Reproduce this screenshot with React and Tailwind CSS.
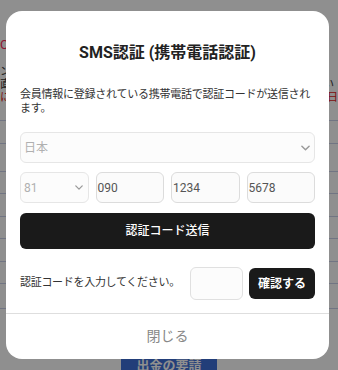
import React from 'react';

const Chevron = ({ className }) => (
  <svg className={className} viewBox="0 0 10 6" fill="none">
    <path d="M1 1l4 4 4-4" stroke="#9a9a9a" strokeWidth="1.6" strokeLinecap="round" strokeLinejoin="round" />
  </svg>
);

const BackgroundPage = () => (
  <div className="w-full h-full bg-white text-[11px] leading-[13px]">
    <div className="h-[38px]" />
    <div className="text-[#ff2a5a] text-[13px]">OF</div>
    <div className="h-[14px]" />
    <div className="flex justify-between text-[#333]">
      <span>ン</span>
      <span />
    </div>
    <div className="flex justify-between text-[#333]">
      <span>直</span>
      <span className="pr-[4px]">しい</span>
    </div>
    <div className="flex justify-between text-[#e02020]">
      <span>に有</span>
      <span>能日</span>
    </div>
    <div className="h-[17px] border-b border-[#c9d0ea]" />
    <div className="h-[23px] border-b border-[#c9d0ea]" />
    <div className="h-[28px] border-b border-[#c9d0ea]" />
    <div className="h-[22px] border-b border-[#c9d0ea]" />
    <div className="h-[23px] border-b border-[#c9d0ea]" />
    <div className="h-[22px] border-b border-[#c9d0ea]" />
    <div className="h-[23px] border-b border-[#c9d0ea]" />
    <div className="h-[22px] border-b border-[#c9d0ea]" />
    <div className="h-[25px] border-b border-[#c9d0ea]" />
    <div className="flex justify-center pt-[46px]">
      <div className="w-[96px] h-[30px] bg-[#3d6fd8] text-white text-[13px] font-bold flex items-start justify-center pt-[4px]">
        出金の要請
      </div>
    </div>
  </div>
);

export default function App() {
  return (
    <div
      className="relative w-[338px] h-[370px] overflow-hidden"
      style={{ fontFamily: 'Roboto, "Noto Sans CJK JP", sans-serif' }}
    >
      <BackgroundPage />
      <div className="absolute inset-0 bg-black/[0.44] pt-[11px] pl-[6px]">
        <div className="w-[323px] bg-white rounded-[16px] flex flex-col">
          <div className="px-[14px]">
            <h2 className="pt-[30px] h-[54px] text-center text-[16px] leading-[24px] font-bold text-[#222]">
              SMS認証 (携帯電話認証)
            </h2>
            <p className="mt-[23px] text-[11px] leading-[13.5px] tracking-[-0.25px] text-[#333]">
              会員情報に登録されている携帯電話で認証コードが送信されます。
            </p>

            <div className="mt-[17px] h-[31px] flex items-center justify-between rounded-[6px] border border-[#e6e6e6] bg-[#fcfcfc] pl-[3px] pr-[4px]">
              <span className="text-[12px] text-[#b0b0b0]">日本</span>
              <Chevron className="w-[9px] h-[6px]" />
            </div>

            <div className="mt-[9px] grid grid-cols-4 gap-[7px]">
              <div className="h-[31px] flex items-center justify-between rounded-[6px] border border-[#e6e6e6] bg-[#fcfcfc] pl-[3px] pr-[5px]">
                <span className="text-[12px] text-[#b0b0b0]">81</span>
                <Chevron className="w-[8px] h-[5px]" />
              </div>
              <div className="h-[31px] flex items-center rounded-[6px] border border-[#dcdcdc] bg-[#fbfbfb] pl-[1px] text-[12px] text-[#555]">090</div>
              <div className="h-[31px] flex items-center rounded-[6px] border border-[#dcdcdc] bg-[#fbfbfb] pl-[1px] text-[12px] text-[#555]">1234</div>
              <div className="h-[31px] flex items-center rounded-[6px] border border-[#dcdcdc] bg-[#fbfbfb] pl-[1px] text-[12px] text-[#555]">5678</div>
            </div>

            <button className="mt-[10px] w-full h-[36px] rounded-[6px] bg-[#1a1a1a] text-white text-[12px] font-medium flex items-center justify-center">
              認証コード送信
            </button>

            <div className="mt-[18px] h-[33px] flex items-center">
              <span className="flex-1 text-[11px] tracking-[-0.3px] text-[#333]">認証コードを入力してください。</span>
              <div className="w-[53px] h-[33px] rounded-[6px] border border-[#e0e0e0] bg-[#fcfcfc]" />
              <button className="ml-[6px] w-[66px] h-[31px] rounded-[6px] bg-[#1a1a1a] text-white text-[12px] font-bold flex items-center justify-center">
                確認する
              </button>
            </div>
          </div>

          <div className="mt-[13px] border-t border-[#dedede] h-[46px] flex items-center justify-center text-[14px] text-[#888]">
            閉じる
          </div>
        </div>
      </div>
    </div>
  );
}
